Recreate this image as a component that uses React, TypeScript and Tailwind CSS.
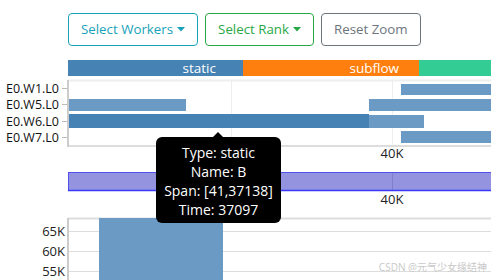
import React from 'react';

const font = { fontFamily: '"Open Sans", "Noto Sans CJK SC", sans-serif' };

const Caret = () => (
  <svg width="8" height="5" viewBox="0 0 8 5" className="ml-1 inline-block">
    <path d="M0 0 L8 0 L4 4.5 Z" fill="currentColor" />
  </svg>
);

const rows = [
  { label: 'E0.W1.L0', y: 88 },
  { label: 'E0.W5.L0', y: 104 },
  { label: 'E0.W6.L0', y: 121 },
  { label: 'E0.W7.L0', y: 137 },
];

const bars = [
  { x: 401, y: 84, w: 90, h: 11, c: '#6b9bc4' },
  { x: 68, y: 99, w: 118, h: 12, c: '#6b9bc4' },
  { x: 369, y: 99, w: 122, h: 12, c: '#6b9bc4' },
  { x: 369, y: 115, w: 55, h: 13, c: '#6b9bc4' },
  { x: 67, y: 114, w: 302, h: 14, c: '#4682b4' },
  { x: 401, y: 131, w: 90, h: 12, c: '#6b9bc4' },
];

export default function App() {
  return (
    <div className="relative w-[491px] h-[280px] overflow-hidden bg-white" style={font}>
      <div className="flex gap-[7px] pl-[68px] pt-[13px]">
        <button className="h-[33px] px-3 rounded border border-[#17a2b8] text-[#17a2b8] text-[13.3px] flex items-center">
          Select Workers<Caret />
        </button>
        <button className="h-[33px] px-3 rounded border border-[#28a745] text-[#28a745] text-[13.3px] flex items-center">
          Select Rank<Caret />
        </button>
        <button className="h-[33px] px-3 rounded border border-[#6c757d] text-[#6c757d] text-[13.3px] flex items-center">
          Reset Zoom
        </button>
      </div>

      <div className="ml-[68px] mt-[14px] flex h-[16px] text-white text-[13.5px] leading-[16px]">
        <div className="w-[175px] bg-[#4682b4] text-right pr-[27px]">static</div>
        <div className="w-[176px] bg-[#ff7f0e] text-right pr-[20px]">subflow</div>
        <div className="flex-1 bg-[#33cc95]" />
      </div>

      <svg width="491" height="204" viewBox="0 76 491 204" className="block">
        {/* timeline frame */}
        <line x1="68" y1="80.5" x2="491" y2="80.5" stroke="#eee" strokeWidth="2" />
        <line x1="231.5" y1="80" x2="231.5" y2="146" stroke="#eee" />
        <line x1="392.5" y1="80" x2="392.5" y2="146" stroke="#eee" />
        <line x1="68" y1="146" x2="491" y2="146" stroke="#ddd" strokeWidth="2" />
        {bars.map((b, i) => (
          <rect key={i} x={b.x} y={b.y} width={b.w} height={b.h} fill={b.c} />
        ))}
        <line x1="68" y1="80" x2="68" y2="147" stroke="#ccc" strokeWidth="2" />
        {rows.map((r) => (
          <g key={r.label}>
            <line x1="62" y1={r.y + 0.5} x2="67" y2={r.y + 0.5} stroke="#bbb" />
            <text x="59" y={r.y + 4.5} textAnchor="end" fontSize="12.5" fill="#111">
              {r.label}
            </text>
          </g>
        ))}
        <text x="392" y="158" textAnchor="middle" fontSize="13" fill="#222">40K</text>

        {/* brush */}
        <rect x="68.5" y="172.5" width="424" height="18" fill="#9393e0" stroke="#5050f0" />
        <line x1="392.5" y1="173" x2="392.5" y2="190" stroke="#8080c8" />
        <line x1="68" y1="190.5" x2="491" y2="190.5" stroke="#3a3aff" strokeWidth="1.5" />
        <text x="392" y="204" textAnchor="middle" fontSize="13" fill="#222">40K</text>

        {/* histogram */}
        <line x1="68" y1="218.5" x2="491" y2="218.5" stroke="#ddd" strokeWidth="2" />
        <line x1="68" y1="231.5" x2="491" y2="231.5" stroke="#ddd" />
        <line x1="68" y1="251.5" x2="491" y2="251.5" stroke="#ddd" />
        <line x1="68" y1="271.5" x2="491" y2="271.5" stroke="#ddd" />
        <rect x="99" y="218" width="124" height="62" fill="#6b9bc4" />
        <line x1="68" y1="218" x2="68" y2="280" stroke="#ccc" strokeWidth="2" />
        {[
          { t: '65K', y: 231 },
          { t: '60K', y: 251 },
          { t: '55K', y: 271 },
        ].map((tk) => (
          <text key={tk.t} x="65" y={tk.y + 4.5} textAnchor="end" fontSize="13" fill="#222">
            {tk.t}
          </text>
        ))}
      </svg>

      <div className="absolute right-[4px] top-[262px] text-[10px] text-[#c8c8c8] leading-none">
        CSDN @元气少女缘结神
      </div>

      {/* tooltip */}
      <div className="absolute left-[213px] top-[132px] w-0 h-0 border-l-[5px] border-r-[5px] border-b-[5px] border-l-transparent border-r-transparent border-b-black" />
      <div className="absolute left-[156px] top-[137px] w-[125px] h-[86px] bg-black rounded-[6px] text-white text-[14px] leading-[19px] text-center pt-[6px]">
        <div>Type: static</div>
        <div>Name: B</div>
        <div>Span: [41,37138]</div>
        <div>Time: 37097</div>
      </div>
    </div>
  );
}
